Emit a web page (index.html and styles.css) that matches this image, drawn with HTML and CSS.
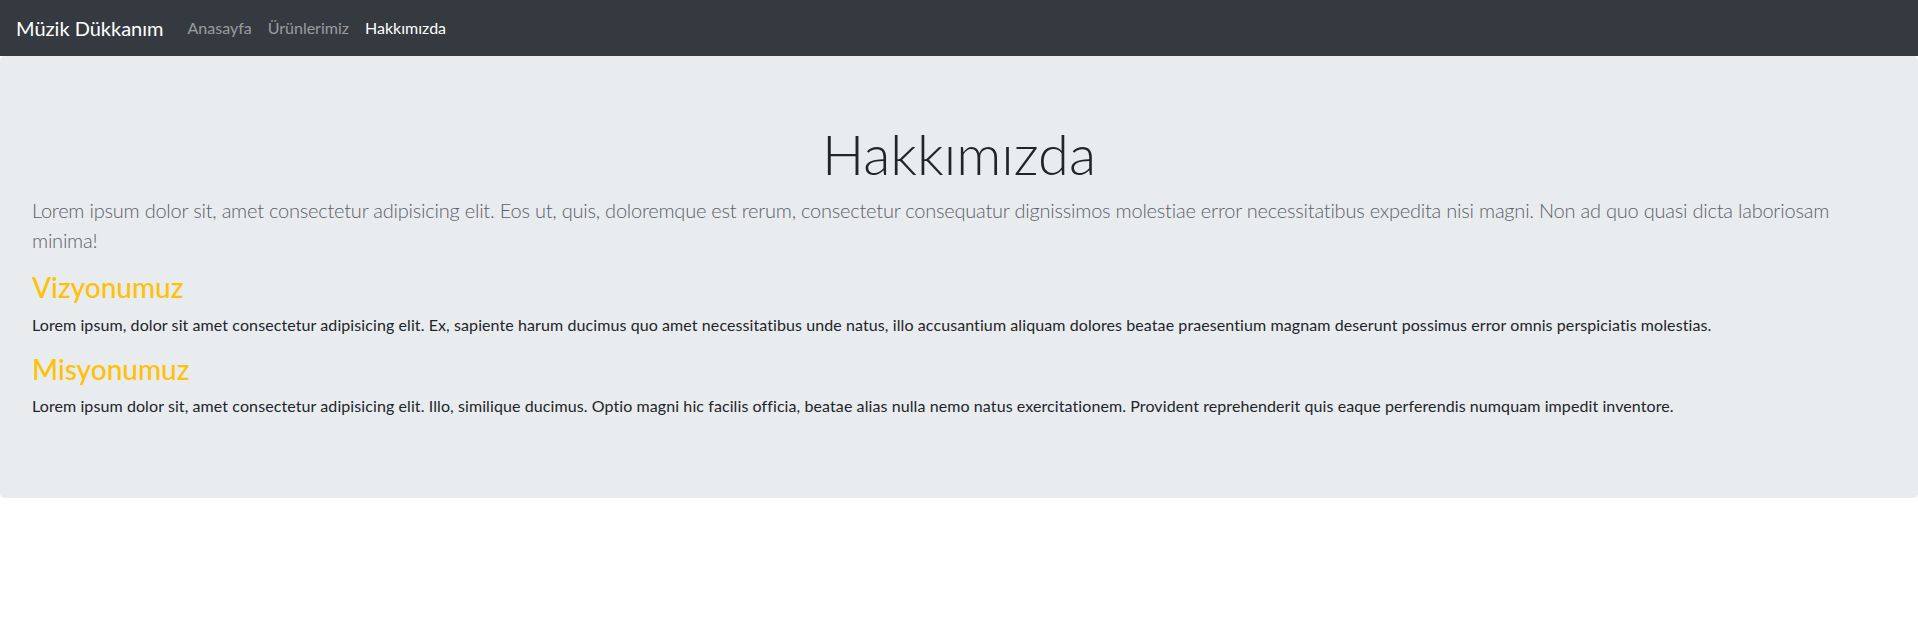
FILE: index.html
```html
<!DOCTYPE html>
<html lang="tr">
<head>
<meta charset="utf-8">
<title>Hakkımızda</title>
<link rel="stylesheet" href="styles.css">
</head>
<body>
<nav class="navbar">
  <a class="brand" href="#">Müzik Dükkanım</a>
  <ul class="nav">
    <li><a class="nav-link" href="#">Anasayfa</a></li>
    <li><a class="nav-link" href="#">Ürünlerimiz</a></li>
    <li><a class="nav-link active" href="#">Hakkımızda</a></li>
  </ul>
</nav>
<section class="jumbotron">
  <h1 class="display">Hakkımızda</h1>
  <p class="lead">Lorem ipsum dolor sit, amet consectetur adipisicing elit. Eos ut, quis, doloremque est rerum, consectetur consequatur dignissimos molestiae error necessitatibus expedita nisi magni. Non ad quo quasi dicta laboriosam minima!</p>
  <h3 class="section-title">Vizyonumuz</h3>
  <p class="text">Lorem ipsum, dolor sit amet consectetur adipisicing elit. Ex, sapiente harum ducimus quo amet necessitatibus unde natus, illo accusantium aliquam dolores beatae praesentium magnam deserunt possimus error omnis perspiciatis molestias.</p>
  <h3 class="section-title">Misyonumuz</h3>
  <p class="text">Lorem ipsum dolor sit, amet consectetur adipisicing elit. Illo, similique ducimus. Optio magni hic facilis officia, beatae alias nulla nemo natus exercitationem. Provident reprehenderit quis eaque perferendis numquam impedit inventore.</p>
</section>
</body>
</html>
```

FILE: styles.css
```css
* { box-sizing: border-box; }
body {
  margin: 0;
  font-family: "Segoe UI", Lato, "Noto Sans", sans-serif;
  font-size: 16px;
  line-height: 1.5;
  color: #212529;
  background: #fff;
}
.navbar {
  display: flex;
  align-items: center;
  background: #343a40;
  padding: 8px 16px;
}
.brand {
  font-size: 20px;
  line-height: 30px;
  padding: 5px 0;
  margin-right: 16px;
  color: #fff;
  text-decoration: none;
}
.nav {
  display: flex;
  list-style: none;
  margin: 0;
  padding: 0;
}
.nav-link {
  display: block;
  padding: 8px;
  color: rgba(255,255,255,.5);
  text-decoration: none;
}
.nav-link.active { color: #fff; }
.jumbotron {
  background: #e9ecef;
  padding: 64px 32px;
  margin-bottom: 32px;
  border-radius: 4.8px;
}
.display {
  margin: 0 0 8px;
  font-size: 56px;
  font-weight: 300;
  line-height: 1.2;
  text-align: center;
  color: #212529;
}
.lead {
  margin: 0 0 16px;
  font-size: 20px;
  font-weight: 300;
  letter-spacing: -0.22px;
  color: #5a6168;
}
.section-title {
  margin: 0 0 8px;
  font-size: 28px;
  font-weight: 500;
  line-height: 1.2;
  color: #ffc107;
}
.text {
  margin: 0 0 16px;
  letter-spacing: 0.09px;
}
```
